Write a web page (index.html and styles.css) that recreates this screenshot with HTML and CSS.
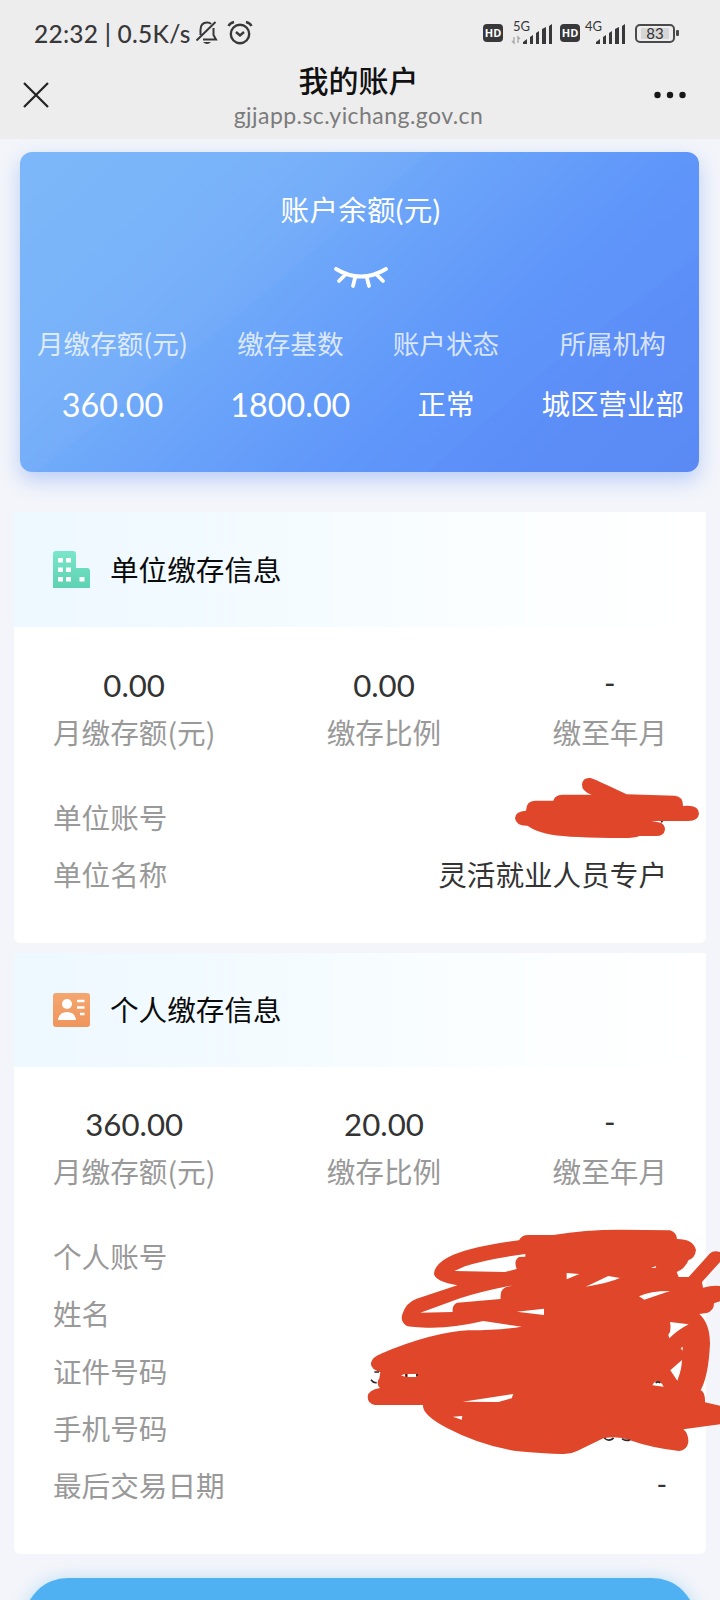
FILE: index.html
```html
<!DOCTYPE html>
<html lang="zh-CN">
<head>
<meta charset="utf-8">
<title>我的账户</title>
<link rel="stylesheet" href="styles.css">
</head>
<body>
<div class="screen">
  <header class="top">
    <div class="status">
      <span class="status-text">22:32 | 0.5K/s</span>
      <svg class="bell" width="24" height="26" viewBox="0 0 24 26" fill="none" stroke="#38383a" stroke-width="2">
        <path d="M5.500 15V10C5.500 5 8 2.500 12 2.500Q15 2.500 16 4M18.500 8V15L21 19.500H8M1.500 20.500L20.500 2"/><path d="M8 22H16Q12 26 8 22Z" fill="#38383a" stroke="none"/>
      </svg>
      <svg class="alarm" width="26" height="26" viewBox="0 0 26 26" fill="none" stroke="#38383a" stroke-width="2.4">
        <circle cx="13" cy="14" r="9.2"/><path d="M9 12L13 15.5L17 12M1.500 6Q3 3 7 2M24.500 6Q23 3 19 2"/>
      </svg>
      <span class="grow"></span>
      <span class="hd">HD</span>
      <svg class="signal" width="42" height="28" viewBox="0 -4 42 28">
        <text x="2" y="9" class="net">5G</text>
        <path d="M3 15V21L1 19M7 21V15L9 17" fill="none" stroke="#aaa" stroke-width="1.400"/>
        <path d="M12 22V20L16 17V22ZM19 22V15L22 13V22ZM25 22V11L28 9V22ZM31 22V7L35 5V22ZM38 22V4L41 2V22Z" fill="#38383a"/>
      </svg>
      <span class="hd hd-second">HD</span>
      <svg class="signal signal-second" width="42" height="28" viewBox="0 -4 42 28">
        <text x="1" y="9" class="net">4G</text>
        <path d="M12 22V20L16 17V22ZM19 22V15L22 13V22ZM25 22V11L28 9V22ZM31 22V7L35 5V22ZM38 22V4L41 2V22Z" fill="#38383a"/>
      </svg>
      <span class="battery"><span class="level">83</span></span><span class="battery-tip"></span>
    </div>
    <div class="nav">
      <svg width="26" height="26" viewBox="0 0 26 26"><path d="M1 1L25 25M25 1L1 25" stroke="#222" stroke-width="2.200"/></svg>
      <div class="titles"><h1>我的账户</h1><p>gjjapp.sc.yichang.gov.cn</p></div>
      <svg width="32" height="8" viewBox="0 0 32 8" fill="#181818"><circle cx="3.500" cy="4" r="3.200"/><circle cx="16" cy="4" r="3.200"/><circle cx="28.500" cy="4" r="3.200"/></svg>
    </div>
  </header>

  <main>
    <section class="balance">
      <svg class="sheen" viewBox="0 0 679 320" preserveAspectRatio="none">
        <path d="M0 0H410L205 174L15 320H0Z" fill="#fff" opacity=".03"/>
        <path d="M679 103L520 222L407 320H679Z" fill="#5a78f5" opacity=".07"/>
      </svg>
      <h2>账户余额(元)</h2>
      <svg class="eye" width="56" height="24" viewBox="0 0 56 24" fill="none" stroke="#fff" stroke-width="3.800" stroke-linecap="round"><path d="M3 3Q28 18 53 3M12 9L6 15M22 12L20 20M34 12L36 20M44 9L50 15"/></svg>
      <div class="facts">
        <div><span>月缴存额(元)</span><b>360.00</b></div>
        <div><span>缴存基数</span><b>1800.00</b></div>
        <div><span>账户状态</span><b class="zh">正常</b></div>
        <div><span>所属机构</span><b class="zh">城区营业部</b></div>
      </div>
    </section>

    <section class="panel company">
      <div class="panel-head">
        <svg width="38" height="38" viewBox="0 0 38 38">
          <defs><linearGradient id="mint" x2="0" y2="1"><stop stop-color="#7ae5ca"/><stop offset="1" stop-color="#5dd2b2"/></linearGradient></defs>
          <path d="M3 0H20Q23 0 23 3V17H34Q37 17 37 20V37H0V3Q0 0 3 0Z" fill="url(#mint)"/>
          <path d="M5 7h5v4.500H5zM13 7h5v4.500h-5zM5 16.500h5V21H5zM13 16.500h5V21h-5zM5 26h5v4.500H5zM13 26h5v4.500h-5zM26.500 26h5v4.500h-5z" fill="#fff"/>
        </svg>
        <h3>单位缴存信息</h3>
      </div>
      <div class="metrics">
        <div><b>0.00</b><span>月缴存额(元)</span></div>
        <div><b>0.00</b><span>缴存比例</span></div>
        <div><b class="none">-</b><span>缴至年月</span></div>
      </div>
      <dl>
        <div><dt>单位账号</dt><dd></dd></div>
        <div><dt>单位名称</dt><dd>灵活就业人员专户</dd></div>
      </dl>
    </section>

    <section class="panel personal">
      <div class="panel-head">
        <svg width="38" height="38" viewBox="0 0 38 38">
          <defs><linearGradient id="orange" x2="0" y2="1"><stop stop-color="#f4a66f"/><stop offset="1" stop-color="#ef955c"/></linearGradient></defs>
          <rect y="2" width="37" height="34" rx="3" fill="url(#orange)"/>
          <circle cx="14" cy="13" r="5" fill="#fff"/><path d="M5 29Q6 21 14 21T23 29Z" fill="#fff"/>
          <path d="M24 10H31.500M24 16.500H31.500M27 23H31.500" stroke="#fff" stroke-width="2.400"/>
        </svg>
        <h3>个人缴存信息</h3>
      </div>
      <div class="metrics">
        <div><b>360.00</b><span>月缴存额(元)</span></div>
        <div><b>20.00</b><span>缴存比例</span></div>
        <div><b class="none">-</b><span>缴至年月</span></div>
      </div>
      <dl>
        <div><dt>个人账号</dt><dd></dd></div>
        <div><dt>姓名</dt><dd></dd></div>
        <div><dt>证件号码</dt><dd></dd></div>
        <div><dt>手机号码</dt><dd></dd></div>
        <div><dt>最后交易日期</dt><dd class="none">-</dd></div>
      </dl>
    </section>
    <div class="action"></div>
  </main>

  <svg class="marks" width="720" height="1600" viewBox="0 0 720 1600">
    <g transform="translate(360 500) scale(.33333)">
      <path d="M465 955Q465 934 498 932Q499 902 525 902H580Q584 885 607 884H695Q665 875 666 853Q669 831 692 834Q701 836 800 883L945 887Q969 889 969 918Q1017 913 1017 941Q1015 962 985 963H875L902 968Q915 974 915 989Q912 1008 888 1008H838Q825 1014 790 1014Q630 1013 575 1004Q531 997 502 977Q468 978 465 955Z" fill="#e04629"/>
      <path d="M902 963H910L905 970Z" fill="#333"/>
    </g>
    <g transform="translate(340 1200) scale(.33333)">
      <path fill="#e04629" fill-rule="evenodd" d="M537 121Q545 105 565 105H640Q735 89 840 89L990 91Q1009 96 1011 117Q1060 117 1068 150Q1065 174 1046 180Q1034 207 1010 216L1016 231H1046L1109 161Q1120 150 1140 156V186L1086 246L1089 263Q1115 256 1140 258V304L1122 310Q1122 333 1100 339L1078 342Q1109 369 1110 430Q1106 526 1082 571Q1096 577 1095 607L1140 617V673L1030 688Q1046 701 1045 727Q1041 751 1017 753Q935 744 870 721Q835 707 790 715L713 752Q690 764 665 762Q553 758 510 750Q410 731 321 684Q246 645 249 615H105Q83 611 83 590Q84 570 120 564Q107 551 118 535L121 517Q90 506 93 489Q95 472 123 461Q275 397 385 391Q480 391 545 380L430 363Q350 382 275 383Q211 382 200 377Q180 366 187 343Q197 308 230 296L352 256Q288 245 282 223Q282 190 340 164Q410 136 537 121Z
      M343 213L495 216L530 207Q520 181 537 171L556 170V162Q443 177 375 199ZM241 338L338 336Q336 313 352 308L482 297Q479 270 497 262L518 256Q425 274 360 295ZM680 219L718 222L680 238ZM737 260L805 228L840 234Q810 248 737 260ZM897 289Q930 273 990 273L913 299ZM530 335L612 326V345ZM933 204L949 198L946 204ZM990 366L1046 373Q1013 390 988 415L985 404Q995 393 990 366ZM1022 445L1028 440V452ZM991 511L1026 480Q1025 510 1012 542ZM183 526L195 522V530ZM203 522H228V531H203ZM368 605L520 582L515 595L475 606ZM339 650L367 648L365 659ZM937 556Q944 542 954 544T971 560Z"/>
      <path d="M103 516H117M93 539Q101 550 110 548M199 522V530M231 522V528M947 549Q954 542 961 549M793 714Q806 727 821 714M846 716Q858 725 870 719" fill="none" stroke="#30262a" stroke-width="5"/>
    </g>
  </svg>
</div>
</body>
</html>
```
FILE: styles.css
```css
* { box-sizing: border-box; }
body { margin: 0; font-family: Lato, "Noto Sans CJK SC", sans-serif; background: #f3f5fa; }
h1, h2, h3, p, dl, dd { margin: 0; font-weight: 400; }
.screen { position: relative; width: 720px; height: 1600px; overflow: hidden; }
.top { height: 139px; background: #ededed; }

.status { display: flex; align-items: center; height: 66px; padding: 0 41px 0 34px; color: #38383a; }
.status-text { width: 158px; font-size: 24.5px; font-weight: 500; letter-spacing: .25px; white-space: nowrap; }
.bell { margin-left: 3px; }
.alarm { margin-left: 8px; }
.grow { flex: 1; }
.hd { width: 20px; height: 18px; border-radius: 4px; background: #38383a; color: #fff; font: 700 11px/18px "Open Sans", sans-serif; text-align: center; }
.hd-second { margin-left: 7px; }
.signal { margin: 0 0 3px 8px; overflow: visible; }
.signal-second { margin-left: 4px; }
.net { font: 13px Lato, sans-serif; fill: #38383a; }
.battery { width: 40px; height: 19px; margin-left: 9px; padding: 2px 4px; border: 2px solid #4a4a4a; border-radius: 5px; }
.level { display: flex; align-items: center; justify-content: center; height: 11px; background: #d6d6d6; color: #333; font-size: 15px; line-height: 18px; }
.battery-tip { width: 3px; height: 6px; margin-left: 1px; border-radius: 1px; background: #4a4a4a; }

.nav { display: flex; align-items: center; justify-content: space-between; height: 58px; padding: 0 34px 0 23px; }
.titles { text-align: center; padding: 2px 0 0 14px; }
.titles h1 { color: #111; font-size: 30px; font-weight: 500; line-height: 38px; }
.titles p { color: #7b7b7b; font-size: 23px; line-height: 33px; letter-spacing: .45px; }

.balance { position: relative; width: 679px; height: 320px; margin: 13px 0 0 20px; padding: 38px 15px 0 17px; border-radius: 12px; color: #fff; background: linear-gradient(137deg, #78b6f9 0%, #74aff9 28%, #5f96fa 65%, #5b8bf5 100%); box-shadow: 0 8px 20px rgba(91, 143, 245, .38); }
.sheen { position: absolute; inset: 0; width: 100%; height: 100%; border-radius: 12px; }
.balance h2, .eye, .facts { position: relative; }
.balance h2 { font-size: 28.5px; line-height: 40px; letter-spacing: .3px; text-align: center; }
.eye { display: block; margin: 36px auto 0; }
.facts { display: flex; justify-content: space-between; margin-top: 33px; }
.facts div { display: flex; flex-direction: column; align-items: center; }
.facts span { font-family: "Noto Sans CJK SC", sans-serif; font-size: 26.6px; line-height: 40px; color: rgba(255, 255, 255, .76); }
.facts b { margin-top: 22px; font-size: 32.3px; font-weight: 400; line-height: 40px; }
.facts .zh { margin-top: 21px; font-size: 28.5px; }

.panel { width: 692px; margin-left: 14px; border-radius: 6px; background: #fff; }
.company { height: 431px; margin-top: 40px; }
.personal { height: 601px; margin-top: 10px; }
.panel-head { display: flex; align-items: center; height: 115px; padding-left: 39px; background: linear-gradient(90deg, #edf8ff, #f3fbff 35%, #fbfeff 70%, #fff); }
.panel-head h3 { margin-left: 19px; color: #0b0b0b; font-size: 28.6px; line-height: 42px; }
.company .panel-head svg { margin-top: 1px; }
.metrics { display: flex; justify-content: space-between; padding: 34px 39px 0; }
.metrics div { display: flex; flex-direction: column; align-items: center; }
.metrics b { color: #333; font-size: 31.2px; font-weight: 400; line-height: 48px; }
.metrics span { color: #999; font-family: "Noto Sans CJK SC", sans-serif; font-size: 28.6px; line-height: 46px; }
.metrics .none { height: 48px; line-height: 43px; }
.panel dl { padding: 35px 39px 0; }
.panel dl div { display: flex; justify-content: space-between; height: 57.3px; font-size: 28.6px; line-height: 57px; }
.panel dt { color: #999; }
.panel dd { color: #333; }
.panel dd.none { line-height: 53px; }
.personal .panel-head { height: 114px; }
.personal .metrics { padding-top: 33px; }

.action { width: 672px; height: 88px; margin: 24px 0 0 24px; border-radius: 44px; background: #50b1f2; box-shadow: 0 0 16px rgba(80, 177, 242, .35); }
.marks { position: absolute; left: 0; top: 0; pointer-events: none; }
```
